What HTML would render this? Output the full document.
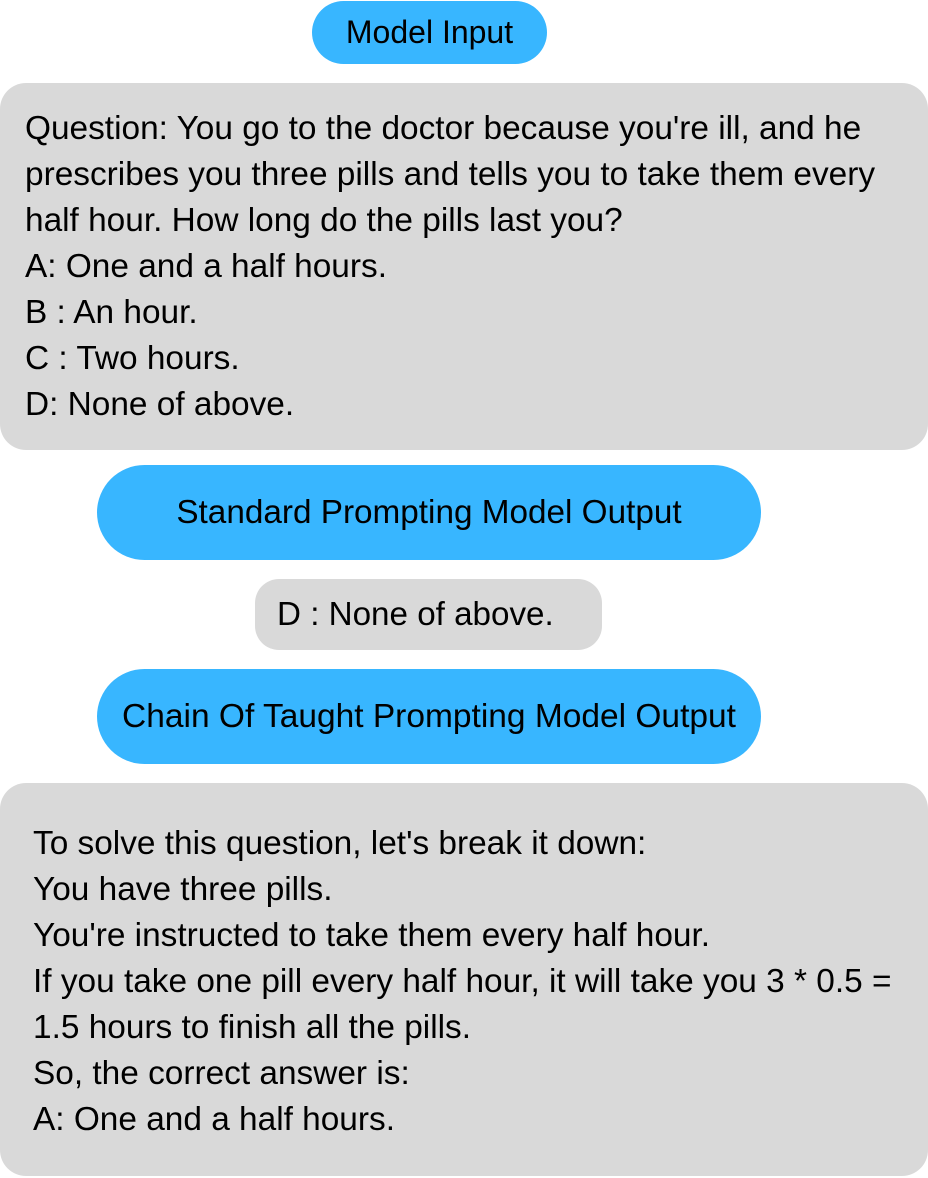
<!DOCTYPE html>
<html><head><meta charset="utf-8"><style>
body{margin:0;width:928px;height:1178px;background:#fff;font-family:"Liberation Sans",sans-serif;color:#000;position:relative;overflow:hidden}
.p{position:absolute;background:#38b6ff;display:flex;align-items:center;justify-content:center;font-size:33.3px}
.g{position:absolute;background:#d9d9d9}
.t{position:absolute;font-size:33.4px;line-height:46px;white-space:nowrap}
</style></head><body>
<div class="p" style="left:312px;top:1px;width:235px;height:63px;border-radius:32px;font-size:32px">Model Input</div>
<div class="g" style="left:0;top:83px;width:928px;height:367px;border-radius:26px"></div>
<div class="t" style="left:25px;top:106px">Question: You go to the doctor because you're ill, and he<br>prescribes you three pills and tells you to take them every<br>half hour. How long do the pills last you?<br>A: One and a half hours.<br>B : An hour.<br>C : Two hours.<br>D: None of above.</div>
<div class="p" style="left:97px;top:465px;width:664px;height:95px;border-radius:48px">Standard Prompting Model Output</div>
<div class="g" style="left:255px;top:579px;width:347px;height:71px;border-radius:24px"></div>
<div class="t" style="left:277px;top:592px;font-size:33.2px">D : None of above.</div>
<div class="p" style="left:97px;top:669px;width:664px;height:95px;border-radius:48px;font-size:33.5px">Chain Of Taught Prompting Model Output</div>
<div class="g" style="left:0;top:783px;width:928px;height:393px;border-radius:26px"></div>
<div class="t" style="left:33px;top:821px">To solve this question, let's break it down:<br>You have three pills.<br>You're instructed to take them every half hour.<br>If you take one pill every half hour, it will take you 3 * 0.5 =<br>1.5 hours to finish all the pills.<br>So, the correct answer is:<br>A: One and a half hours.</div>
</body></html>
